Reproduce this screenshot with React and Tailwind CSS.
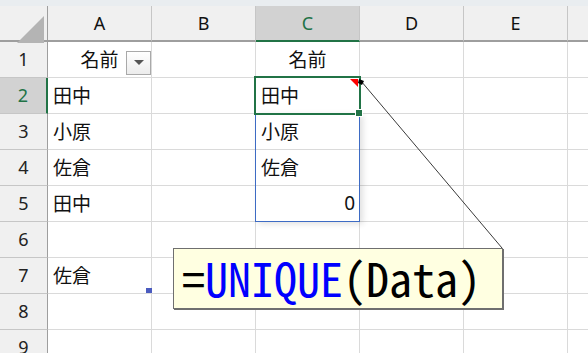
import React from "react";

const COLS = ["A", "B", "C", "D", "E", "F"];
const ROWS = [1, 2, 3, 4, 5, 6, 7, 8, 9];

const DATA = {
  1: { A: "名前", C: "名前" },
  2: { A: "田中", C: "田中" },
  3: { A: "小原", C: "小原" },
  4: { A: "佐倉", C: "佐倉" },
  5: { A: "田中", C: "0" },
  7: { A: "佐倉" },
};

function Cell({ row, col }) {
  const v = (DATA[row] || {})[col];
  const isHeaderRow = row === 1;
  const isNum = v === "0";
  return (
    <div
      className={
        "relative h-[36px] border-r border-b border-[#dadada] flex items-center text-[19px] text-[#111] " +
        (isHeaderRow ? "justify-center " : isNum ? "justify-end pr-[4px] " : "justify-start pl-[5px] ")
      }
    >
      {v ? <span className={isNum ? "font-['Noto_Sans',sans-serif] text-[19px]" : ""}>{v}</span> : null}
      {row === 1 && col === "A" ? (
        <div className="absolute left-[78px] top-[9px] w-[25px] h-[24px] border border-[#a9a9a9] bg-gradient-to-b from-white to-[#ececec] flex items-center justify-center">
          <svg width="10" height="6" viewBox="0 0 10 6">
            <polygon points="0,0 10,0 5,5" fill="#555" />
          </svg>
        </div>
      ) : null}
    </div>
  );
}

export default function App() {
  return (
    <div className="relative w-[588px] h-[353px] overflow-hidden bg-white font-['Noto_Sans_CJK_JP','Noto_Sans',sans-serif]">
      <div className="h-[6px] bg-[#e9edf0]" />
      <div className="grid grid-cols-[48px_104px_104px_104px_104px_104px_104px]">
        {/* header row */}
        <div className="relative h-[36px] bg-[#f0f0f0] border-r border-r-[#9e9e9e] border-b-2 border-b-[#9e9e9e]">
          <svg className="absolute left-[17px] top-[10px]" width="27" height="27" viewBox="0 0 27 27">
            <polygon points="27,0 27,27 0,27" fill="#b4b4b4" />
          </svg>
        </div>
        {COLS.map((c) => (
          <div
            key={c}
            className={
              "h-[36px] flex items-center justify-center text-[18px] font-['Noto_Sans',sans-serif] border-r border-r-[#c6c6c6] border-b-2 " +
              (c === "C" ? "bg-[#d2d2d2] text-[#217346] border-b-[#217346]" : "bg-[#f0f0f0] text-[#111] border-b-[#9e9e9e]")
            }
          >
            {c === "F" ? "" : c}
          </div>
        ))}
        {ROWS.map((r) => (
          <React.Fragment key={r}>
            <div
              className={
                "h-[36px] flex items-center justify-center text-[18px] font-['Noto_Sans',sans-serif] border-b border-b-[#c6c6c6] " +
                (r === 2
                  ? "bg-[#d2d2d2] text-[#217346] border-r-2 border-r-[#217346]"
                  : "bg-[#f0f0f0] text-[#222] border-r border-r-[#9e9e9e]")
              }
            >
              {r}
            </div>
            {COLS.map((c) => (
              <Cell key={c} row={r} col={c} />
            ))}
          </React.Fragment>
        ))}
      </div>

      {/* spill range border */}
      <div className="absolute left-[255px] top-[113px] w-[105px] h-[109px] border border-[#3d6bc4] shadow-[3px_2px_6px_rgba(0,0,0,0.12)]" />

      {/* active cell */}
      <div className="absolute left-[254px] top-[76px] w-[107px] h-[39px] border-[2px] border-[#217346]" />
      <div className="absolute left-[356px] top-[110px] w-[6px] h-[6px] bg-[#217346] outline outline-1 outline-white" />

      {/* table resize handle in A7 */}
      <div className="absolute left-[146px] top-[288px] w-[6px] h-[5px] bg-[#4a5bbf]" />

      {/* comment indicator and leader line */}
      <svg className="absolute left-0 top-0" width="588" height="353" viewBox="0 0 588 353">
        <polygon points="350,79 358,79 358,87" fill="#ff0000" />
        <line x1="361" y1="81" x2="502" y2="248" stroke="#3a3a3a" strokeWidth="1" />
        <polygon points="359,79 364,81 362,85 358,83" fill="#000" />
      </svg>

      {/* comment box */}
      <div className="absolute left-[173px] top-[248px] w-[330px] h-[61px] bg-[#ffffe1] border border-[#6f6f6f] shadow-[1px_1px_0_#6f6f6f] flex items-center pl-[8px] pb-[3px]">
        <span className="font-['Noto_Sans_Mono_CJK_JP','DejaVu_Sans_Mono',monospace] text-[46px] leading-none text-black whitespace-nowrap">
          =<span className="text-[#0000ff]">UNIQUE</span>(Data)
        </span>
      </div>
    </div>
  );
}
